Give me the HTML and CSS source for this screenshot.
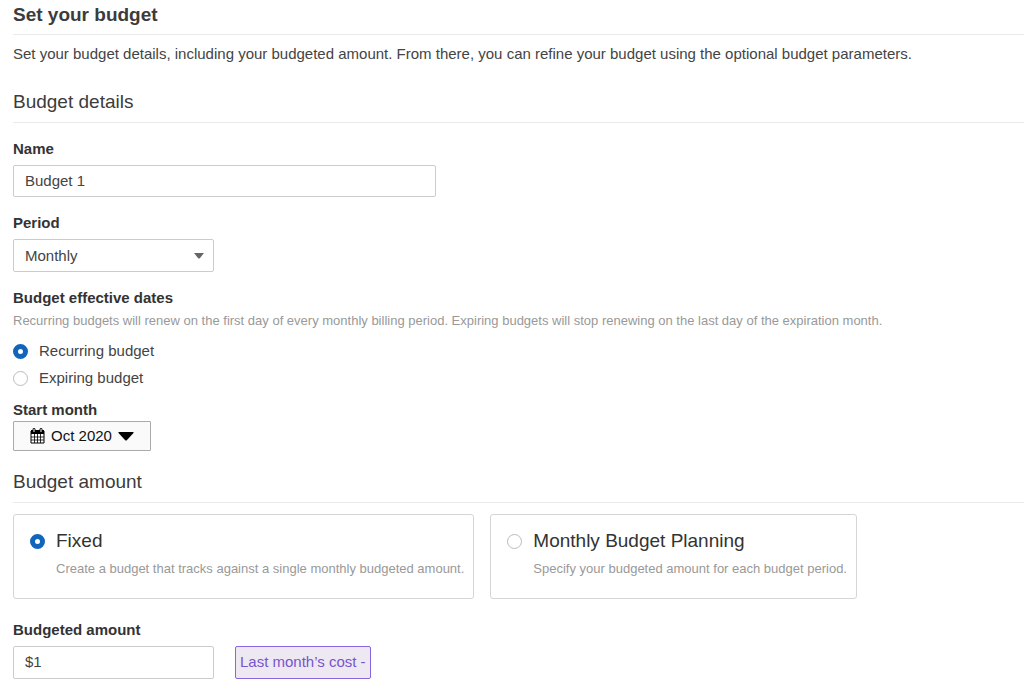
FILE: index.html
```html
<!DOCTYPE html>
<html lang="en">
<head>
  <meta charset="UTF-8">
  <meta name="viewport" content="width=device-width, initial-scale=1">
  <title>Set your budget</title>
  <link rel="stylesheet" href="styles.css">
</head>
<body>

<main>
  <h1>Set your budget</h1>
  <p class="intro">Set your budget details, including your budgeted amount. From there, you can refine your budget using the optional budget parameters.</p>

  <form>
    <h2>Budget details</h2>

    <div class="field">
      <label class="label" for="budgetName">Name</label>
      <input class="box name-box" type="text" id="budgetName" value="Budget 1">
    </div>

    <div class="field">
      <label class="label" for="period">Period</label>
      <div class="select-wrap">
        <select class="box" id="period">
          <option>Daily</option>
          <option selected>Monthly</option>
          <option>Quarterly</option>
          <option>Annually</option>
        </select>
        <svg class="select-arrow" width="10" height="6" viewBox="0 0 10 6"><path d="M0 0h10L6 5Q5 6 4 5z" fill="#666"/></svg>
      </div>
    </div>

    <fieldset class="field">
      <legend class="label">Budget effective dates</legend>
      <p class="help">Recurring budgets will renew on the first day of every monthly billing period. Expiring budgets will stop renewing on the last day of the expiration month.</p>
      <div class="radio-list">
        <label class="radio-row"><input type="radio" name="effective" checked> Recurring budget</label>
        <label class="radio-row"><input type="radio" name="effective"> Expiring budget</label>
      </div>
    </fieldset>

    <div class="start">
      <label class="label" for="startMonth">Start month</label>
      <button class="month-button" type="button" id="startMonth">
        <svg width="15" height="16" viewBox="0 0 15 16">
          <path d="M1 3h13v12H1z" fill="#fff" stroke="#000"/>
          <path d="M1 2h13v4H1z"/>
          <path d="M4.500 6v9M7.500 6v9M10.500 6v9M1 9h13M1 12h13" stroke="#000" stroke-width=".8"/>
          <path d="M4 1.500v2M11 1.500v2" stroke="#000" stroke-width="3" stroke-linecap="round"/>
          <path d="M4 1v3M11 1v3" stroke="#fff"/>
        </svg>
        <span>Oct 2020</span>
        <svg width="16" height="9" viewBox="0 0 16 9"><path d="M1 0h14q1 0 .5 1L9 8Q8 9 7 8L.5 1Q0 0 1 0z"/></svg>
      </button>
    </div>

    <h2>Budget amount</h2>

    <div class="cards">
      <label class="card">
        <input type="radio" name="planning" checked>
        <span class="card-text">
          <span class="card-title">Fixed</span>
          <span class="help">Create a budget that tracks against a single monthly budgeted amount.</span>
        </span>
      </label>
      <label class="card">
        <input type="radio" name="planning">
        <span class="card-text">
          <span class="card-title">Monthly Budget Planning</span>
          <span class="help">Specify your budgeted amount for each budget period.</span>
        </span>
      </label>
    </div>

    <div class="amount">
      <label class="label" for="amount">Budgeted amount</label>
      <div class="amount-row">
        <input class="box amount-box" type="text" id="amount" value="$1">
        <span class="last-cost">Last month’s cost -</span>
      </div>
    </div>
  </form>
</main>

</body>
</html>
```

FILE: styles.css
```css
* {
  box-sizing: border-box;
}
body {
  margin: 0;
  background: #fff;
  color: #444;
  font-family: "Liberation Sans", Arial, sans-serif;
  font-size: 15px;
  line-height: 20px;
}
main {
  padding: 3px 0 16px 13px;
}
h1, h2 {
  margin: 0;
  padding-bottom: 8px;
  border-bottom: 1px solid #eaeaea;
  color: #3c3c3c;
  font-size: 19px;
  line-height: 24px;
}
h1 {
  padding-bottom: 7px;
}
h2 {
  font-weight: normal;
}
.intro {
  margin: 9px 0 26px;
}
.field {
  margin: 16px 0 0;
  padding: 0;
  border: none;
}
.label {
  display: block;
  margin-bottom: 6px;
  padding: 0;
  color: #333;
  font-weight: bold;
}
.box {
  display: block;
  height: 32px;
  padding: 0 11px 2px;
  border: 1px solid #ccc;
  border-radius: 2px;
  background: #fff;
  color: #444;
  font: inherit;
}
.name-box {
  width: 423px;
  max-width: 100%;
}
.select-wrap {
  position: relative;
  width: 201px;
}
.select-wrap .box {
  width: 100%;
  height: 33px;
  padding-bottom: 0;
  appearance: none;
}
.select-arrow {
  position: absolute;
  top: 14px;
  right: 10px;
  pointer-events: none;
}
.help {
  margin: 0;
  color: #999;
  font-size: 13px;
}
fieldset .label {
  margin-bottom: 3px;
}
.radio-list {
  display: flex;
  flex-direction: column;
  gap: 7px;
  margin-top: 10px;
}
.radio-row {
  display: flex;
  align-items: center;
  gap: 11px;
}
input[type="radio"] {
  flex: none;
  width: 15px;
  height: 15px;
  margin: 0;
  border: 1px solid #bbb;
  border-radius: 50%;
  background: #fff;
  appearance: none;
}
input[type="radio"]:checked {
  border: 5px solid #1166bb;
}
.start {
  margin: 12px 0 19px;
}
.start .label {
  margin-bottom: 1px;
}
.month-button {
  display: flex;
  align-items: center;
  justify-content: center;
  gap: 6px;
  width: 138px;
  height: 30px;
  padding: 0;
  border: 1px solid #aaa;
  border-radius: 1px;
  background: #fafafa;
  color: #111;
  font: inherit;
}
.cards {
  display: flex;
  flex-wrap: wrap;
  gap: 16px;
  margin-top: 11px;
}
.card {
  display: flex;
  gap: 11px;
  padding: 14px 9px 19px 16px;
  border: 1px solid #d5d5d5;
  border-radius: 3px;
}
.card input[type="radio"] {
  margin-top: 5px;
}
.card-text {
  display: flex;
  flex-direction: column;
  gap: 6px;
}
.card-title {
  color: #333;
  font-size: 19px;
  line-height: 24px;
}
.amount {
  margin-top: 21px;
}
.amount-row {
  display: flex;
  gap: 21px;
}
.amount-box {
  width: 201px;
  height: 33px;
}
.last-cost {
  height: 33px;
  padding: 5px 4px;
  border: 1px solid #8866dd;
  border-radius: 2px;
  background: #eee8f2;
  color: #7755cc;
}
```
